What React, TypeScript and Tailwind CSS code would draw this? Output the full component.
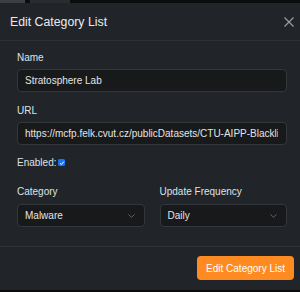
export default function App() {
  return (
    <div className="w-[300px] h-[292px] overflow-hidden bg-[#0b0c0d] font-['Liberation_Sans',Arial,sans-serif]">
      {/* strip of the page behind the modal */}
      <div className="flex h-[3px] gap-[5px]">
        <div className="w-[25px] bg-[#3d4043]" />
        <div className="w-[40px] bg-[#2a2d30]" />
      </div>

      <div className="w-[304px] bg-[#212529] text-[#dee2e6]">
        <div className="flex h-[38px] items-center justify-between border-b border-[#2d3135] px-[10px]">
          <h2 className="text-[12.3px] leading-[18px] text-[#e9ecef]">Edit Category List</h2>
          <svg width="10" height="10" viewBox="0 0 10 10" className="text-[#9ea2a6]">
            <path d="M0.5 0.5L9.5 9.5M9.5 0.5L0.5 9.5" stroke="currentColor" strokeWidth="1.1" />
          </svg>
        </div>

        <div className="px-[17px] pt-[9px] pb-[19px] text-[10px] leading-[15px]">
          <label className="block mb-[4px]">Name</label>
          <div className="flex h-[23px] items-center rounded-[4px] border border-[#33373b] bg-[#18191b] px-[7px] text-[#e2e5e8]">
            Stratosphere Lab
          </div>

          <label className="block mt-[11px] mb-[4px]">URL</label>
          <div className="flex h-[23px] items-center rounded-[4px] border border-[#33373b] bg-[#18191b] pl-[7px] pr-[8px] text-[#e2e5e8]">
            <span className="block overflow-hidden whitespace-nowrap">
              https://mcfp.felk.cvut.cz/publicDatasets/CTU-AIPP-Blacklist
            </span>
          </div>

          <div className="mt-[10px] flex items-center gap-[2px]">
            <span>Enabled:</span>
            <span className="flex h-[7px] w-[7px] items-center justify-center rounded-[1.5px] bg-[#1a73f0]">
              <svg width="6" height="6" viewBox="0 0 6 6">
                <path d="M1 3.2L2.4 4.5L5 1.5" fill="none" stroke="white" strokeWidth="1" />
              </svg>
            </span>
          </div>

          <div className="mt-[14px] grid grid-cols-2 gap-[15px]">
            <div>
              <label className="block mb-[5px]">Category</label>
              <div className="flex h-[23px] items-center justify-between rounded-[4px] border border-[#33373b] bg-[#18191b] px-[7px] text-[#e2e5e8]">
                <span>Malware</span>
                <svg width="7" height="4" viewBox="0 0 7 4" className="mr-[2px] text-[#5f6469]">
                  <path d="M0.5 0.5L3.5 3.3L6.5 0.5" fill="none" stroke="currentColor" strokeWidth="1" />
                </svg>
              </div>
            </div>
            <div>
              <label className="block mb-[5px]">Update Frequency</label>
              <div className="flex h-[23px] items-center justify-between rounded-[4px] border border-[#33373b] bg-[#18191b] px-[7px] text-[#e2e5e8]">
                <span>Daily</span>
                <svg width="7" height="4" viewBox="0 0 7 4" className="mr-[2px] text-[#5f6469]">
                  <path d="M0.5 0.5L3.5 3.3L6.5 0.5" fill="none" stroke="currentColor" strokeWidth="1" />
                </svg>
              </div>
            </div>
          </div>
        </div>

        <div className="flex justify-end border-t border-[#2d3135] px-[10px] pt-[9px] pb-[10px]">
          <button className="h-[24px] rounded-[4px] bg-[#fd8b21] px-[9px] text-[10px] text-white">
            Edit Category List
          </button>
        </div>
      </div>
    </div>
  );
}
